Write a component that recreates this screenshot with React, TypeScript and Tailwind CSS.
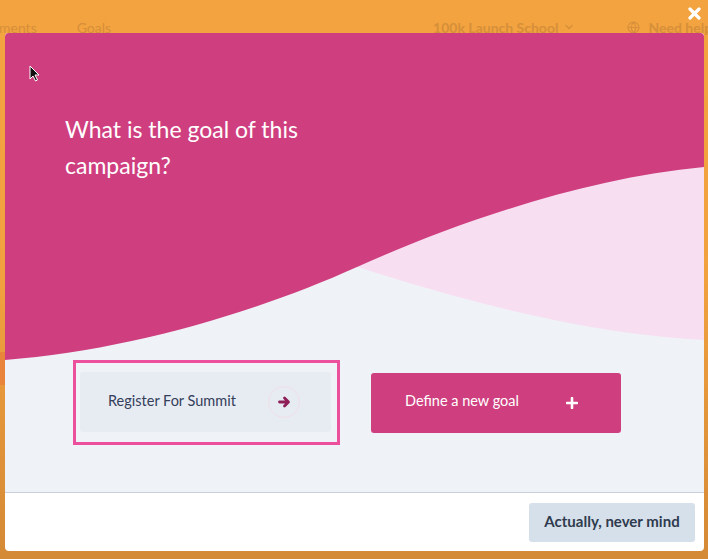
import { ChevronDown, Globe } from 'lucide-react'

const font = { fontFamily: 'Lato, "Open Sans", sans-serif' }

function ArrowIcon() {
  return (
    <svg width="13" height="12" viewBox="0 0 13 12" fill="none">
      <path
        d="M1.5 6h8.5M6.5 2l4 4-4 4"
        stroke="#8e1f57"
        strokeWidth="2.8"
        strokeLinecap="round"
        strokeLinejoin="round"
      />
    </svg>
  )
}

function PlusIcon() {
  return (
    <svg width="12" height="12" viewBox="0 0 12 12" fill="none">
      <path d="M6 1v10M1 6h10" stroke="#fff" strokeWidth="2.6" strokeLinecap="round" />
    </svg>
  )
}

function Wave() {
  return (
    <svg
      className="absolute inset-0 h-full w-full"
      viewBox="0 0 699 459"
      preserveAspectRatio="none"
    >
      <path d="M352 234C420 255 560 300 699 307V0H352Z" fill="#f7dff1" />
      <path
        d="M0 0H699V134C580 145 450 190 352 234C250 280 120 318 0 327Z"
        fill="#cf3f7f"
      />
    </svg>
  )
}

export default function App() {
  return (
    <div
      className="relative h-[559px] w-[708px] overflow-hidden bg-gradient-to-b from-[#f3a33f] via-[#f1a13e] to-[#d48935]"
      style={font}
    >
      {/* page behind the overlay */}
      <div className="flex h-[54px] items-center text-[14px] text-[#d68f3a]">
        <span className="-ml-px">ments</span>
        <span className="ml-[40px]">Goals</span>
        <span className="ml-[322px] flex items-center gap-[5px] font-bold whitespace-nowrap">
          100k Launch School <ChevronDown size={12} strokeWidth={2.5} />
        </span>
        <span className="ml-[52px] flex items-center gap-[8px] font-bold whitespace-nowrap">
          <Globe size={13} strokeWidth={2} /> Need help?
        </span>
      </div>
      <div className="mt-[298px] h-[33px] w-[8px] bg-[#e9853a]" />

      {/* close */}
      <svg className="absolute right-[7px] top-[7px]" width="13" height="13" viewBox="0 0 13 13">
        <path d="M2 2l9 9M11 2l-9 9" stroke="#fff" strokeWidth="3.2" strokeLinecap="round" />
      </svg>

      {/* modal */}
      <div className="absolute left-[5px] top-[33px] flex h-[518px] w-[699px] flex-col overflow-hidden rounded-[4px] bg-white">
        <div className="relative flex h-[459px] flex-col bg-[#eff3f8]">
          <Wave />
          <h1 className="relative box-content w-[270px] pl-[60px] pt-[78px] text-[23px] leading-[36px] font-normal text-white">
            What is the goal of this campaign?
          </h1>
          <div className="relative mt-[177px] flex items-center pl-[68px]">
            <div className="border-[3px] border-[#ec4f9c] pt-[9px] pb-[10px] pl-[4px] pr-[6px]">
              <button className="flex h-[60px] w-[251px] items-center justify-between rounded-[3px] bg-[#e7ebf2] pb-[3px] pl-[28px] pr-[31px] text-[14.5px] text-[#34405a]">
                Register For Summit
                <span className="mt-[3px] flex h-[32px] w-[32px] items-center justify-center rounded-full border border-[#f1dfe8]">
                  <ArrowIcon />
                </span>
              </button>
            </div>
            <button className="ml-[31px] flex h-[60px] w-[250px] items-center justify-between rounded-[3px] bg-[#cf3f7f] pb-[3px] pl-[34px] pr-[43px] text-[14.5px] text-white">
              Define a new goal
              <span className="mt-[3px] flex">
                <PlusIcon />
              </span>
            </button>
          </div>
        </div>
        <div className="flex flex-1 items-start justify-end border-t border-[#c9cfd9] pr-[9px] pt-[10px]">
          <button className="h-[39px] w-[166px] rounded-[3px] bg-[#d6e0ea] pb-[2px] text-[15px] font-bold text-[#2f3b4e]">
            Actually, never mind
          </button>
        </div>
      </div>

      {/* cursor */}
      <svg className="absolute left-[29px] top-[65px]" width="11" height="17" viewBox="0 0 11 17">
        <path d="M1 1v13l3-3 2.5 5 2-1-2.5-5H10Z" fill="#111" stroke="#fff" strokeWidth="1" />
      </svg>
    </div>
  )
}
